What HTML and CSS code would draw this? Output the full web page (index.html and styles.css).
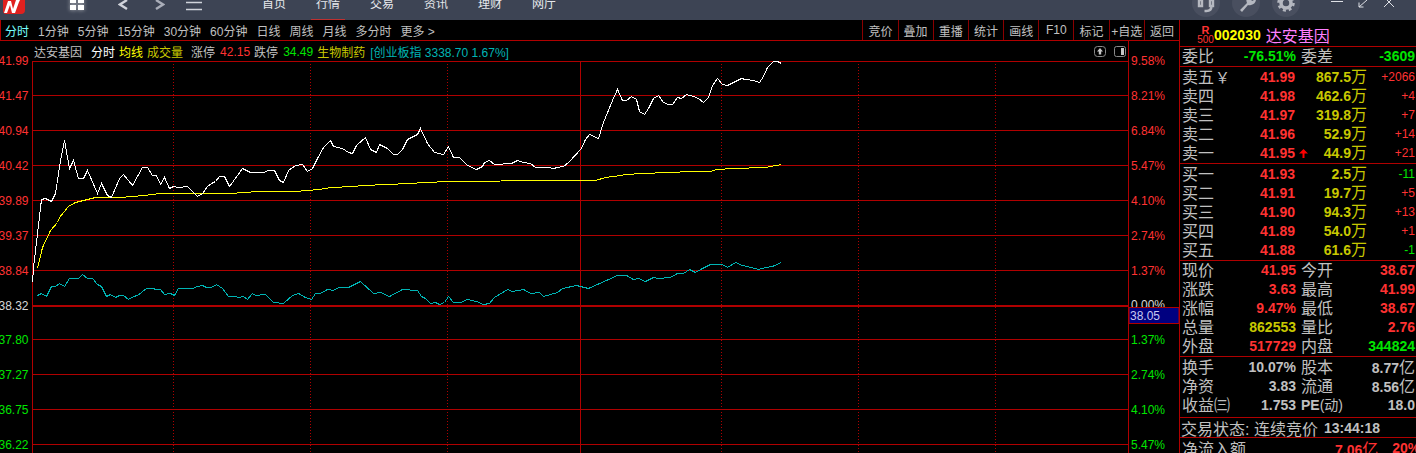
FILE: index.html
```html
<!DOCTYPE html>
<html lang="zh-CN">
<head>
  <meta charset="UTF-8" />
  <title>达安基因 分时</title>
  <link rel="stylesheet" href="styles.css">
</head>
<body>
  <!-- Top bar -->
  <header class="topbar">
    <svg class="logo" width="26" height="14" viewBox="0 0 26 14">
      <path d="M3 0h22v10q0 4-4 4H6q-3 0-3-3z" fill="#e0211f" />
      <path d="M4 13 8 1h3l2 8 3-9h4l-1 2-4 11h-3l-2-8-3 8z" fill="#fff" />
    </svg>
    <svg class="grid-icon" width="16" height="12" viewBox="0 0 16 12">
      <path d="M1 0h6v4H1zM9 0h6v4H9zM1 6h6v5H1zM9 6h6v5H9z" fill="#fff" />
    </svg>
    <svg class="back-icon" width="11" height="11" viewBox="0 0 11 11">
      <path d="M9 0 2 4.500 9 9" fill="none" stroke="#d0d3da" stroke-width="2.400" />
    </svg>
    <svg class="next-icon" width="11" height="11" viewBox="0 0 11 11">
      <path d="M2 0 9 4.500 2 9" fill="none" stroke="#a9adb8" stroke-width="2.400" />
    </svg>
    <svg class="menu-icon" width="16" height="12" viewBox="0 0 16 12">
      <path d="M0 2.500h16M0 9.500h16" fill="none" stroke="#d0d3da" stroke-width="1.600" />
    </svg>
    <nav class="nav">
      <span>首页</span>
      <span class="nav-on">行情</span>
      <span>交易</span>
      <span>资讯</span>
      <span>理财</span>
      <span>网厅</span>
    </nav>
    <div class="round-btns">
      <span class="round-btn">
        <svg width="28" height="28" viewBox="0 0 28 28">
          <path d="M7 11h3v6H7zM18 11h3v6h-3zM19.500 17q0 5-5 5h-2" fill="none" stroke="#b5b8c0" stroke-width="2.400" />
        </svg>
      </span>
      <span class="round-btn">
        <svg width="28" height="28" viewBox="0 0 28 28">
          <path d="M8 21 15 14q-2-5 2-8l4-1-3 4 2 3 4-2q0 5-5 6-2 .5-3 0l-6 7z" fill="#b5b8c0" />
        </svg>
      </span>
      <span class="round-btn">
        <svg width="28" height="28" viewBox="0 0 28 28">
          <circle cx="14" cy="14" r="5" fill="none" stroke="#b5b8c0" stroke-width="3.500" />
          <circle cx="14" cy="14" r="7.500" fill="none" stroke="#b5b8c0" stroke-width="2.500" stroke-dasharray="3 2.900" />
        </svg>
      </span>
    </div>
    <div class="win-btns">
      <svg width="12" height="8" viewBox="0 0 12 8"><path d="M0 1.500h12" stroke="#dfe1e6" fill="none" /></svg>
      <svg width="10" height="8" viewBox="0 0 10 8"><path d="M1 7 9 0M1 2.500V7h4.500" stroke="#dfe1e6" fill="none" /></svg>
      <svg width="12" height="8" viewBox="0 0 12 8"><path d="M1 7 10 -2M11 7 2 -2" stroke="#dfe1e6" fill="none" /></svg>
    </div>
  </header>

  <div class="main">
    <section class="left">
      <!-- Period tabs and tools -->
      <div class="toolbar">
        <div class="periods">
          <span class="period-on">分时</span>
          <span>1分钟</span>
          <span>5分钟</span>
          <span>15分钟</span>
          <span>30分钟</span>
          <span>60分钟</span>
          <span>日线</span>
          <span>周线</span>
          <span>月线</span>
          <span>多分时</span>
          <span>更多 &gt;</span>
        </div>
        <div class="tools">
          <span>竞价</span>
          <span>叠加</span>
          <span>重播</span>
          <span>统计</span>
          <span>画线</span>
          <span>F10</span>
          <span>标记</span>
          <span>+自选</span>
          <span>返回</span>
        </div>
      </div>

      <!-- Chart title row -->
      <div class="chart-head">
        <span class="ch-name">达安基因</span>
        <span class="ch-white">分时</span>
        <span class="ch-yellow">均线</span>
        <span class="ch-olive">成交量</span>
        <span class="ch-limit">涨停</span>
        <span class="ch-red">42.15</span>
        <span class="ch-fall">跌停</span>
        <span class="ch-green">34.49</span>
        <span class="ch-olive ch-sector">生物制药</span>
        <span class="ch-cyan">[创业板指 3338.70 1.67%]</span>
        <span class="ch-icons">
          <svg width="12" height="11" viewBox="0 0 12 11">
            <rect x=".5" y=".5" width="11" height="10" rx="3" fill="none" stroke="#8a8a8a" />
            <path d="M6 2 9 5.500H7.200V8.500H4.800V5.500H3z" fill="#c8c8c8" />
          </svg>
          <svg width="12" height="11" viewBox="0 0 12 11">
            <rect x=".5" y=".5" width="11" height="10" rx="2" fill="none" stroke="#8a8a8a" />
            <rect x="7" y="2" width="3" height="7" fill="#c8c8c8" />
          </svg>
        </span>
      </div>

      <!-- Minute chart: coordinates are page pixels -->
      <svg class="chart" width="1179" height="392" viewBox="0 61 1179 392">
        <g class="grid-solid">
          <path d="M32 61.500H1128M32 95.500H1128M32 130.500H1128M32 165.500H1128M32 200.500H1128M32 235.500H1128M32 270.500H1128M32 339.500H1128M32 374.500H1128M32 409.500H1128M32 444.500H1128" />
          <path d="M32.500 61V453M1128.500 41V453M580.500 61V453" />
          <path class="grid-mid" d="M32 306H1128" />
        </g>
        <path class="grid-dots" d="M173.500 61V453M310.500 61V453M447.500 61V453M721.500 61V453M858.500 61V453M995.500 61V453" />

        <g class="axis-left">
          <text class="up" x="28.500" y="65">41.99</text>
          <text class="up" x="28.500" y="100">41.47</text>
          <text class="up" x="28.500" y="135">40.94</text>
          <text class="up" x="28.500" y="170">40.42</text>
          <text class="up" x="28.500" y="205">39.89</text>
          <text class="up" x="28.500" y="240">39.37</text>
          <text class="up" x="28.500" y="275">38.84</text>
          <text class="flat" x="28.500" y="310">38.32</text>
          <text class="down" x="28.500" y="344">37.80</text>
          <text class="down" x="28.500" y="379">37.27</text>
          <text class="down" x="28.500" y="414">36.75</text>
          <text class="down" x="28.500" y="449">36.22</text>
        </g>
        <g class="axis-right">
          <text class="up" x="1131" y="65">9.58%</text>
          <text class="up" x="1131" y="100">8.21%</text>
          <text class="up" x="1131" y="135">6.84%</text>
          <text class="up" x="1131" y="170">5.47%</text>
          <text class="up" x="1131" y="205">4.10%</text>
          <text class="up" x="1131" y="240">2.74%</text>
          <text class="up" x="1131" y="275">1.37%</text>
          <text class="flat" x="1131" y="309">0.00%</text>
          <text class="down" x="1131" y="344">1.37%</text>
          <text class="down" x="1131" y="379">2.74%</text>
          <text class="down" x="1131" y="414">4.10%</text>
          <text class="down" x="1131" y="449">5.47%</text>
        </g>

        <rect class="cursor-box" x="1129" y="307.500" width="50" height="16" />
        <text class="cursor-text" x="1130" y="320">38.05</text>

        <polyline class="line-volume" points="37,295 41,293 46,296 51,286 55,286 59,283 64,286 69,278 78,278 82,274 87,278 92,278 97,284 101,286 106,296 110,294 115,297 119,295 123,295 128,299 133,296 137,295 146,288 152,288 156,289 160,289 164,294 170,293 174,295 178,288 182,288 187,288 192,288 197,286 202,285 206,287 211,287 216,284 222,288 228,296 235,296 238,297 243,296 247,299 252,293 255,295 265,294 273,302 283,303 292,295 298,293 305,297 311,299 315,293 320,293 327,289 333,290 338,287 348,287 360,281 373,293 380,292 389,296 402,289 417,290 421,296 425,298 430,303 435,302 439,304 444,302 448,296 453,302 460,302 467,299 476,301 483,304 489,303 494,297 507,289 512,291 523,289 530,293 539,292 543,296 557,292 562,288 576,285 588,288 597,284 617,275 626,275 633,279 638,278 645,281 653,277 658,278 670,277 677,273 683,273 689,269 695,272 702,268 710,264 722,264 727,267 735,262 742,265 747,266 758,269 765,267 772,266 781,262" />
        <polyline class="line-avg" points="37,268 42,247 50,230 57,222 59,217 68,206 75,202 83,200 95,197 120,197 143,195 160,193 230,193 258,191 295,191 318,189 331,187 353,186 363,185 386,184 410,183 423,182 450,181 551,180 595,180 605,177 620,175 625,174 642,173 668,172 692,171 710,171 716,169 733,168 765,167 781,164" />
        <polyline class="line-price" points="32,282 33,267 37,233 41,199 45,198 51,201 55,193 60,160 64,140 69,168 73,160 78,178 83,178 87,170 97,193 101,183 107,195 111,197 119,178 123,174 132,185 142,167 147,167 152,175 156,175 160,184 164,177 169,188 173,186 178,187 187,186 197,196 202,193 207,186 211,183 215,181 219,176 224,176 229,186 237,175 242,168 250,172 258,172 263,172 268,170 274,170 279,180 283,182 288,170 295,165 302,164 307,171 312,168 317,158 323,147 330,140 333,146 342,148 348,152 352,153 356,145 365,137 370,149 376,152 379,144 387,148 393,154 397,154 402,149 407,139 417,134 420,128 427,143 434,152 443,154 448,146 453,157 459,157 467,165 476,169 482,166 484,162 489,160 494,164 511,163 517,160 523,162 530,163 535,167 541,167 548,167 553,168 557,167 563,166 568,162 581,148 585,139 589,134 598,138 603,122 612,100 617,89 622,100 626,100 631,96 636,99 639,111 644,114 648,108 653,98 658,95 663,102 668,104 672,104 677,97 681,98 686,94 693,96 698,98 703,102 708,97 712,85 717,78 722,84 727,85 733,82 741,78 745,79 753,80 759,82 763,76 767,67 773,61 777,61 781,63" />
      </svg>
    </section>

    <!-- Quote panel -->
    <aside class="panel">
      <div class="stock-head">
        <span class="stock-tag"><b>R</b><i>500</i></span>
        <span class="stock-code">002030</span>
        <span class="stock-name">达安基因</span>
      </div>

      <div class="section">
        <div class="row">
          <div class="pair"><span>委比</span><b class="green">-76.51%</b></div>
          <div class="pair"><span>委差</span><b class="green">-3609</b></div>
        </div>
      </div>

      <div class="section book">
        <div class="book-row"><span class="book-label">卖五<em>￥</em></span><b class="red">41.99</b><i></i><b class="yellow vol">867.5<u>万</u></b><small class="red">+2066</small></div>
        <div class="book-row"><span>卖四</span><b class="red">41.98</b><i></i><b class="yellow vol">462.6<u>万</u></b><small class="red">+4</small></div>
        <div class="book-row"><span>卖三</span><b class="red">41.97</b><i></i><b class="yellow vol">319.8<u>万</u></b><small class="red">+7</small></div>
        <div class="book-row"><span>卖二</span><b class="red">41.96</b><i></i><b class="yellow vol">52.9<u>万</u></b><small class="red">+14</small></div>
        <div class="book-row"><span>卖一</span><b class="red">41.95</b><i class="arrow">
          <svg width="9" height="9" viewBox="0 0 9 9"><path d="M4.500 0 9 4.500H5.500V9h-2V4.500H0z" fill="#ff0000" /></svg>
        </i><b class="yellow vol">44.9<u>万</u></b><small class="red">+21</small></div>
      </div>

      <div class="section book">
        <div class="book-row"><span>买一</span><b class="red">41.93</b><i></i><b class="yellow vol">2.5<u>万</u></b><small class="green">-11</small></div>
        <div class="book-row"><span>买二</span><b class="red">41.91</b><i></i><b class="yellow vol">19.7<u>万</u></b><small class="red">+5</small></div>
        <div class="book-row"><span>买三</span><b class="red">41.90</b><i></i><b class="yellow vol">94.3<u>万</u></b><small class="red">+13</small></div>
        <div class="book-row"><span>买四</span><b class="red">41.89</b><i></i><b class="yellow vol">54.0<u>万</u></b><small class="red">+1</small></div>
        <div class="book-row"><span>买五</span><b class="red">41.88</b><i></i><b class="yellow vol">61.6<u>万</u></b><small class="green">-1</small></div>
      </div>

      <div class="section">
        <div class="row">
          <div class="pair"><span>现价</span><b class="red">41.95</b></div>
          <div class="pair"><span>今开</span><b class="red">38.67</b></div>
        </div>
        <div class="row">
          <div class="pair"><span>涨跌</span><b class="red">3.63</b></div>
          <div class="pair"><span>最高</span><b class="red">41.99</b></div>
        </div>
        <div class="row">
          <div class="pair"><span>涨幅</span><b class="red">9.47%</b></div>
          <div class="pair"><span>最低</span><b class="red">38.67</b></div>
        </div>
        <div class="row">
          <div class="pair"><span>总量</span><b class="yellow">862553</b></div>
          <div class="pair"><span>量比</span><b class="red">2.76</b></div>
        </div>
        <div class="row">
          <div class="pair"><span>外盘</span><b class="red">517729</b></div>
          <div class="pair"><span>内盘</span><b class="green">344824</b></div>
        </div>
      </div>

      <div class="section finance">
        <div class="row">
          <div class="pair"><span>换手</span><b>10.07%</b></div>
          <div class="pair"><span>股本</span><b>8.77<u>亿</u></b></div>
        </div>
        <div class="row">
          <div class="pair"><span>净资</span><b>3.83</b></div>
          <div class="pair"><span>流通</span><b>8.56<u>亿</u></b></div>
        </div>
        <div class="row">
          <div class="pair"><span>收益㈢</span><b>1.753</b></div>
          <div class="pair"><span class="pe-label"><b>PE</b>(动)</span><b>18.0</b></div>
        </div>
      </div>

      <div class="section status">
        <span>交易状态: 连续竞价</span>
        <b>13:44:18</b>
      </div>

      <div class="flow">
        <span>净流入额</span>
        <b class="red">7.06<u>亿</u></b>
        <b class="red flow-pct">20%</b>
      </div>
    </aside>
  </div>
</body>
</html>
```

FILE: styles.css
```css
* {
  box-sizing: border-box;
}

html, body {
  height: 453px;
  overflow: hidden;
}

body {
  margin: 0;
  background: #000;
  color: #c0c0c0;
  font-family: "Liberation Sans", "Noto Sans CJK SC", sans-serif;
  font-size: 12px;
}

/* Top bar */
.topbar {
  display: flex;
  align-items: flex-start;
  height: 20px;
  background: #3d4454;
  overflow: hidden;
}

.logo {
  flex: none;
}

.grid-icon {
  flex: none;
  margin-left: 43px;
  margin-top: -1px;
  filter: drop-shadow(0 0 2px rgba(255, 255, 255, 0.6));
}

.back-icon {
  flex: none;
  margin-left: 33px;
}

.next-icon {
  flex: none;
  margin-left: 25px;
}

.menu-icon {
  flex: none;
  margin-left: 21px;
}

.nav {
  display: flex;
  flex: none;
  margin-left: 49px;
}

.nav span {
  width: 54px;
  height: 20px;
  padding-left: 11px;
  line-height: 9px;
  color: #e6e8ec;
}

.nav .nav-on {
  border-bottom: 1px solid #c03030;
  padding-left: 5px;
  width: 34px;
  margin-left: 6px;
  margin-right: 14px;
}

.round-btns {
  display: flex;
  flex: none;
  gap: 12px;
  margin-left: 617px;
  margin-top: -11px;
}

.round-btn {
  width: 28px;
  height: 28px;
  border-radius: 50%;
  background: #494f5f;
}

.round-btn svg {
  display: block;
}

.win-btns {
  display: flex;
  align-items: flex-start;
  gap: 15px;
  margin-left: 31px;
}

.win-btns svg {
  flex: none;
}

/* Main area */
.main {
  display: flex;
  height: 433px;
}

.left {
  flex: none;
  width: 1180px;
  border-right: 1px solid #b00000;
}

.toolbar {
  display: flex;
  justify-content: space-between;
  height: 21px;
  border-left: 1px solid #b00000;
  border-bottom: 1px solid #b00000;
}

.periods {
  display: flex;
  align-items: center;
  gap: 9px;
  padding-left: 4px;
  white-space: nowrap;
}

.period-on {
  color: #7ff;
}

.tools {
  display: flex;
  height: 20px;
}

.tools span {
  display: flex;
  align-items: center;
  justify-content: center;
  width: 35.200px;
  border-left: 1px solid #8a0000;
}

/* Chart title */
.chart-head {
  display: flex;
  align-items: center;
  height: 20px;
  padding-left: 34px;
  padding-top: 1px;
  white-space: nowrap;
}

.ch-white {
  margin-left: 9px;
  color: #fff;
}

.ch-yellow {
  margin-left: 4px;
  color: #ff0;
}

.ch-olive {
  margin-left: 4px;
  color: #c8c800;
}

.ch-limit {
  margin-left: 8px;
}

.ch-red {
  margin-left: 5px;
  color: #ff3232;
}

.ch-fall {
  margin-left: 4px;
}

.ch-green {
  margin-left: 5px;
  color: #00e600;
}

.ch-sector {
  margin-left: 4px;
}

.ch-cyan {
  margin-left: 5px;
  color: #00b4b4;
}

.ch-icons {
  display: flex;
  gap: 8px;
  margin-left: 585px;
}

/* Chart */
.chart {
  display: block;
  overflow: visible;
}

.grid-solid path {
  fill: none;
  stroke: #b00000;
  stroke-width: 1;
  shape-rendering: crispEdges;
}

.grid-solid .grid-mid {
  stroke-width: 2;
}

.grid-dots {
  fill: none;
  stroke: #b00000;
  stroke-width: 1;
  stroke-dasharray: 1 2;
  shape-rendering: crispEdges;
}

.axis-left text,
.axis-right text,
.cursor-text {
  font-size: 12px;
}

.axis-left text {
  text-anchor: end;
}

.up {
  fill: #ff3232;
}

.flat {
  fill: #d8d8d8;
}

.down {
  fill: #00e600;
}

.cursor-box {
  fill: #000080;
  stroke: #b00000;
  stroke-width: 1;
}

.cursor-text {
  fill: #c8c8f0;
}

/* half pixel shift keeps flat runs on a pixel row */
.line-price,
.line-avg,
.line-volume {
  fill: none;
  stroke-width: 1;
  shape-rendering: crispEdges;
  transform: translate(0.5px, 0.5px);
}

.line-price {
  stroke: #fff;
}

.line-avg {
  stroke: #ff0;
}

.line-volume {
  stroke: #00b4b4;
}

/* Quote panel */
.panel {
  flex: none;
  width: 236px;
  height: 433px;
  overflow: hidden;
  font-size: 16px;
}

.stock-head {
  display: flex;
  align-items: center;
  height: 27px;
  padding-top: 3px;
  border-bottom: 1px solid #b00000;
}

.stock-tag {
  display: flex;
  flex-direction: column;
  align-items: center;
  width: 17px;
  margin-left: 17px;
  line-height: 10px;
  color: #ff3232;
  font-size: 10px;
}

.stock-tag b {
  font-size: 11px;
}

.stock-tag i {
  font-style: normal;
}

.stock-code {
  color: #ff0;
  font-size: 14px;
  font-weight: bold;
}

.stock-name {
  margin-left: 5px;
  color: #ff80ff;
}

.section {
  border-bottom: 1px solid #b00000;
}

.book {
  padding-bottom: 1px;
}

.finance {
  padding: 1px 0 2px;
}

.row {
  display: flex;
  gap: 5px;
  height: 19px;
  padding-left: 2px;
  line-height: 19px;
}

.pair {
  display: flex;
  justify-content: space-between;
  width: 114px;
  white-space: nowrap;
}

.pe-label {
  font-size: 14px;
}

b {
  font-size: 14px;
  font-weight: bold;
}

u {
  font-size: 16px;
  font-weight: normal;
  text-decoration: none;
}

.book-row {
  display: grid;
  grid-template-columns: 44px 69px 14px 58px 48px;
  align-items: center;
  height: 19px;
  padding-left: 2px;
  line-height: 19px;
  white-space: nowrap;
}

.book-label {
  display: flex;
  align-items: center;
}

.book-row em {
  flex: none;
  width: 12px;
  padding-left: 1px;
  font-size: 15px;
  font-style: normal;
}

.book-row b {
  text-align: right;
}

.book-row small {
  font-size: 12px;
  text-align: right;
}

.arrow {
  display: flex;
  padding-left: 4px;
}

.red {
  color: #ff3232;
}

.green {
  color: #00e600;
}

.yellow {
  color: #c8c800;
}

.status {
  display: flex;
  align-items: center;
  gap: 6px;
  height: 20px;
  padding-left: 1px;
}

.flow {
  display: flex;
  align-items: center;
  height: 20px;
  padding-left: 2px;
  white-space: nowrap;
}

.flow b {
  margin-left: 89px;
}

.flow .flow-pct {
  margin-left: 14px;
}
```
